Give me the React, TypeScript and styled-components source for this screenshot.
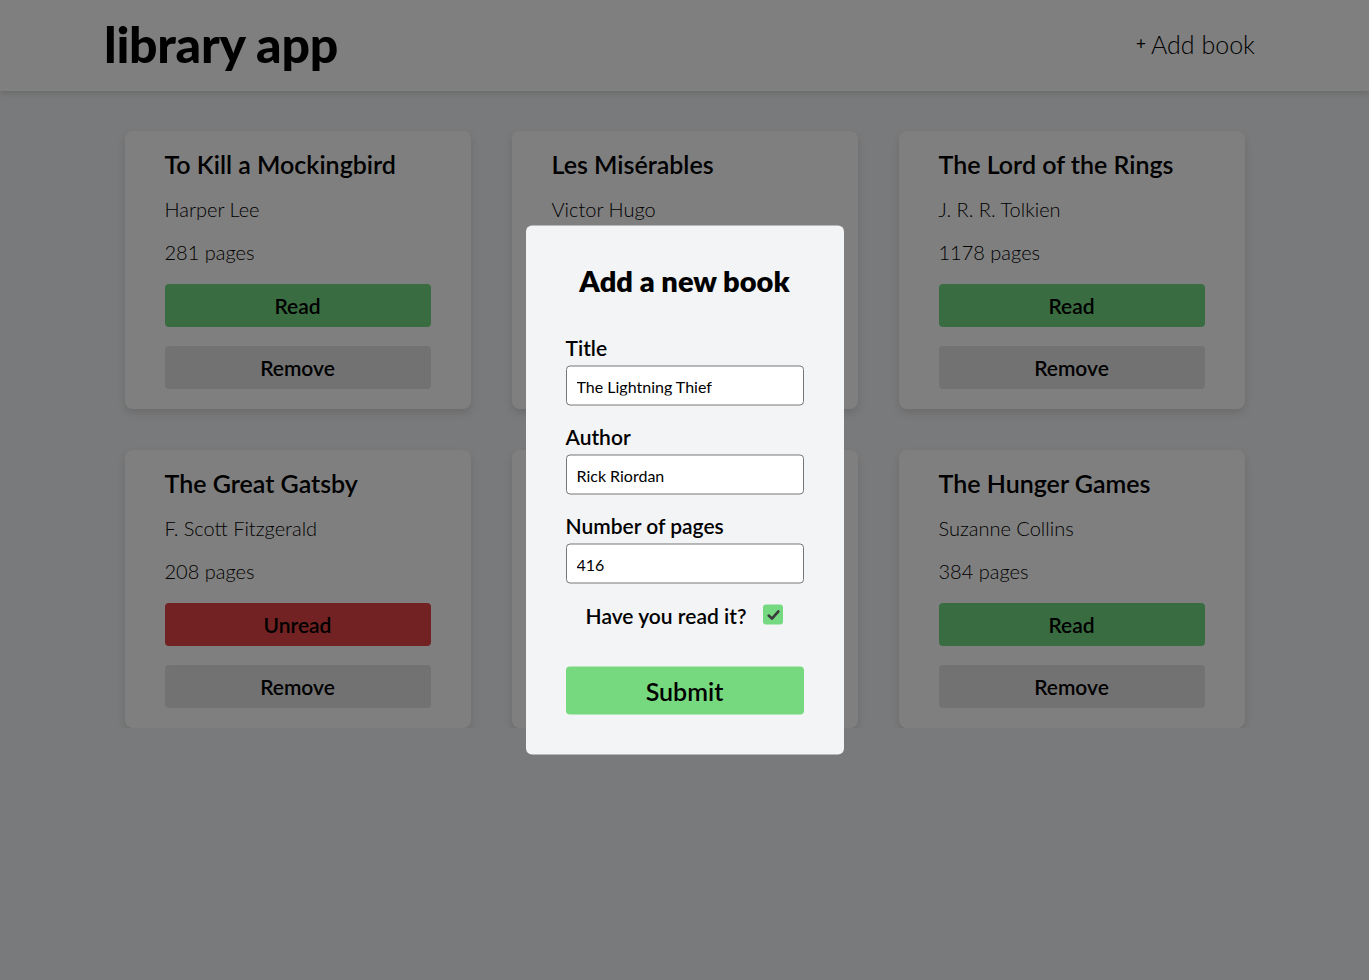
import React from 'react'
import styled, { createGlobalStyle } from 'styled-components'

const books = [
	{ title: 'To Kill a Mockingbird', author: 'Harper Lee', pages: 281, read: true },
	{ title: 'Les Misérables', author: 'Victor Hugo', pages: 1463, read: true },
	{ title: 'The Lord of the Rings', author: 'J. R. R. Tolkien', pages: 1178, read: true },
	{ title: 'The Great Gatsby', author: 'F. Scott Fitzgerald', pages: 208, read: false },
	{ title: 'Pride and Prejudice', author: 'Jane Austen', pages: 432, read: true },
	{ title: 'The Hunger Games', author: 'Suzanne Collins', pages: 384, read: true },
]

const GlobalStyle = createGlobalStyle`
	body {
		margin: 0;
		background: #f3f4f6;
		font-family: Lato, 'Open Sans', sans-serif;
		color: #000;
	}
`

export default function App() {
	return (
		<>
			<GlobalStyle />
			<Header>
				<Logo>library app</Logo>
				<AddLink>
					<Plus>+</Plus> Add book
				</AddLink>
			</Header>
			<Grid>
				{books.map((b, i) => (
					<Card key={i}>
						<Title>{b.title}</Title>
						<Info>{b.author}</Info>
						<Info>{b.pages} pages</Info>
						<Button $kind={b.read ? 'read' : 'unread'}>{b.read ? 'Read' : 'Unread'}</Button>
						<Button $kind="remove">Remove</Button>
					</Card>
				))}
			</Grid>
			<Overlay />
			<Modal>
				<ModalTitle>Add a new book</ModalTitle>
				<Field>
					<Label>Title</Label>
					<Input defaultValue="The Lightning Thief" />
				</Field>
				<Field>
					<Label>Author</Label>
					<Input defaultValue="Rick Riordan" />
				</Field>
				<Field>
					<Label>Number of pages</Label>
					<Input defaultValue="416" />
				</Field>
				<CheckRow>
					<span>Have you read it?</span>
					<CheckBox>
						<svg width="15" height="15" viewBox="0 0 14 14">
							<path d="M2.5 7.5 L5.6 10.4 L11.6 3.6" fill="none" stroke="#3a3a3a" strokeWidth="2.4" strokeLinecap="round" strokeLinejoin="round" />
						</svg>
					</CheckBox>
				</CheckRow>
				<Submit>Submit</Submit>
			</Modal>
		</>
	)
}

const Header = styled.header`
	height: 91px;
	box-sizing: border-box;
	padding: 0 114px 4px 104px;
	background: #fff;
	box-shadow: 0 2px 6px rgba(0, 0, 0, 0.15);
	display: flex;
	align-items: center;
	justify-content: space-between;
`

const Logo = styled.h1`
	margin: 0;
	font-size: 50px;
	font-weight: 900;
	letter-spacing: -0.3px;
`

const AddLink = styled.div`
	font-size: 25px;
	font-weight: 300;
	display: flex;
	align-items: center;
	gap: 5px;
`

const Plus = styled.span`
	font-size: 17px;
	font-weight: 400;
`

const Grid = styled.main`
	display: grid;
	grid-template-columns: repeat(3, 346px);
	gap: 41px;
	justify-content: center;
	padding-top: 40px;
`

const Card = styled.div`
	background: #fff;
	border-radius: 8px;
	box-shadow: 0 4px 8px rgba(0, 0, 0, 0.12);
	padding: 20px 40px;
	display: flex;
	flex-direction: column;
	gap: 19px;
`

const Title = styled.h2`
	margin: -1px 0 1px;
	font-size: 25px;
	font-weight: 600;
	line-height: 28px;
`

const Info = styled.p`
	margin: -1px 0 1px;
	font-size: 20px;
	font-weight: 300;
	line-height: 24px;
`

const colors = { read: '#75d982', unread: '#e44545', remove: '#e5e5e5' }

const Button = styled.button<{ $kind: 'read' | 'unread' | 'remove' }>`
	height: 43px;
	width: 266px;
	border: none;
	border-radius: 4px;
	background: ${(p) => colors[p.$kind]};
	font-family: inherit;
	font-size: 21px;
	font-weight: 600;
	color: #000;
`

const Overlay = styled.div`
	position: fixed;
	inset: 0;
	background: rgba(0, 0, 0, 0.5);
`

const Modal = styled.form`
	position: fixed;
	top: 50%;
	left: 50%;
	transform: translate(-50%, -50%);
	width: 318px;
	box-sizing: border-box;
	background: #f3f4f6;
	border-radius: 6px;
	padding: 40px;
	display: flex;
	flex-direction: column;
`

const ModalTitle = styled.h2`
	margin: 0 0 40px;
	text-align: center;
	font-size: 29px;
	line-height: 30px;
	font-weight: 800;
`

const Field = styled.div`
	display: flex;
	flex-direction: column;
	gap: 6px;
	margin-bottom: 19px;
`

const Label = styled.label`
	font-size: 21px;
	line-height: 24px;
	font-weight: 600;
`

const Input = styled.input`
	height: 40px;
	box-sizing: border-box;
	border: 1px solid #767676;
	border-radius: 4px;
	padding: 0 10px;
	font-family: inherit;
	font-size: 16px;
	background: #fff;
`

const CheckRow = styled.div`
	display: flex;
	align-items: center;
	justify-content: center;
	gap: 17px;
	font-size: 21px;
	font-weight: 600;
	height: 24px;
`

const CheckBox = styled.span`
	width: 20px;
	height: 20px;
	border-radius: 3px;
	background: #75d982;
	display: flex;
	align-items: center;
	justify-content: center;
`

const Submit = styled.button`
	margin-top: 40px;
	height: 48px;
	border: none;
	border-radius: 4px;
	background: #77d97f;
	font-family: inherit;
	font-size: 25px;
	font-weight: 600;
	color: #000;
`
